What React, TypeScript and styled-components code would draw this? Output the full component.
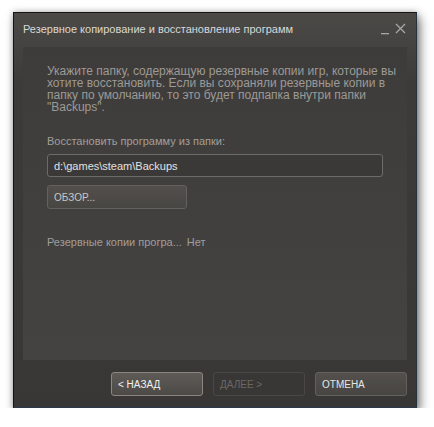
import React, { FC } from 'react';
import styled, { createGlobalStyle } from 'styled-components';

const GlobalStyle = createGlobalStyle`
  html, body {
    margin: 0;
    padding: 0;
    background: #ffffff;
  }
  body {
    font-family: Arial, "Liberation Sans", sans-serif;
  }
`;

const Page = styled.div`
  padding: 12px 0 0 13px;
`;

const DialogWindow = styled.div`
  box-sizing: border-box;
  width: 404px;
  height: 396px;
  border: 1px solid #161514;
  border-bottom-color: #2c3a4a;
  border-right-color: #27323f;
  background: linear-gradient(#4c4a47 0px, #3d3b39 70px, #393735 100%);
  box-shadow: 3px 5px 10px rgba(0, 0, 0, 0.5), 0 0 6px rgba(0, 0, 0, 0.25);
  display: flex;
  flex-direction: column;
  padding: 0 9px 11px;
`;

const TitleBar = styled.div`
  height: 31px;
  display: flex;
  align-items: center;
  justify-content: space-between;
`;

const Title = styled.span`
  font-size: 11px;
  color: #d8d8d6;
  padding-top: 1px;
`;

const WindowControls = styled.div`
  display: flex;
  align-items: center;
  gap: 6px;
  padding-right: 1px;
`;

const Panel = styled.div`
  flex: 1;
  margin-top: 3px;
  background: linear-gradient(#3e3c3a, #454341);
  padding: 18px 24px 0;
  display: flex;
  flex-direction: column;
`;

const Description = styled.p`
  margin: 0 -16px 0 0;
  font-size: 12px;
  line-height: 12px;
  color: #9c9a96;
`;

const FieldLabel = styled.div`
  margin-top: 21px;
  font-size: 11px;
  line-height: 14px;
  color: #a09e9a;
`;

const PathInput = styled.div`
  margin-top: 6px;
  height: 21px;
  border: 1px solid #6d6b67;
  border-radius: 3px;
  background: #3b3937;
  color: #e2e2e0;
  font-size: 11px;
  display: flex;
  align-items: center;
  padding-left: 6px;
`;

const Button = styled.div<{ $variant?: 'primary' | 'default' | 'disabled' }>`
  box-sizing: border-box;
  height: 24px;
  border-radius: 3px;
  display: flex;
  align-items: center;
  padding-left: 6px;
  font-size: 10px;
  text-transform: uppercase;
  border: 1px solid
    ${({ $variant }) =>
      $variant === 'primary' ? '#8a8782' : $variant === 'disabled' ? '#4a4846' : '#63615d'};
  background: ${({ $variant }) =>
    $variant === 'primary'
      ? 'linear-gradient(#5e5b57, #4c4a47)'
      : $variant === 'disabled'
      ? '#393735'
      : 'linear-gradient(#524f4c, #484643)'};
  color: ${({ $variant }) =>
    $variant === 'primary' ? '#f2f2f0' : $variant === 'disabled' ? '#6a6865' : '#e6e6e4'};
`;

const BrowseButton = styled(Button)`
  margin-top: 8px;
  width: 140px;
  color: #c9c7c4;
`;

const Status = styled.div`
  margin-top: 27px;
  font-size: 11px;
  color: #a09e9a;
  display: flex;
  gap: 5px;
`;

const Footer = styled.div`
  display: flex;
  justify-content: flex-end;
  gap: 10px;
  padding-top: 12px;
`;

const FooterButton = styled(Button)`
  width: 92px;
`;

const MinimizeIcon: FC = () => (
  <svg width="8" height="12" viewBox="0 0 8 12">
    <rect x="0" y="10" width="8" height="1.3" fill="#a8a6a2" />
  </svg>
);

const CloseIcon: FC = () => (
  <svg width="11" height="11" viewBox="0 0 11 11">
    <path d="M1 1 L10 10 M10 1 L1 10" stroke="#a8a6a2" strokeWidth="1.3" />
  </svg>
);

const App: FC = () => (
  <Page>
    <GlobalStyle />
    <DialogWindow>
      <TitleBar>
        <Title>Резервное копирование и восстановление программ</Title>
        <WindowControls>
          <MinimizeIcon />
          <CloseIcon />
        </WindowControls>
      </TitleBar>
      <Panel>
        <Description>
          Укажите папку, содержащую резервные копии игр, которые вы хотите восстановить. Если вы
          сохраняли резервные копии в папку по умолчанию, то это будет подпапка внутри папки
          "Backups".
        </Description>
        <FieldLabel>Восстановить программу из папки:</FieldLabel>
        <PathInput>d:\games\steam\Backups</PathInput>
        <BrowseButton>Обзор...</BrowseButton>
        <Status>
          <span>Резервные копии програ...</span>
          <span>Нет</span>
        </Status>
      </Panel>
      <Footer>
        <FooterButton $variant="primary">&lt; Назад</FooterButton>
        <FooterButton $variant="disabled">Далее &gt;</FooterButton>
        <FooterButton>Отмена</FooterButton>
      </Footer>
    </DialogWindow>
  </Page>
);

export default App;
